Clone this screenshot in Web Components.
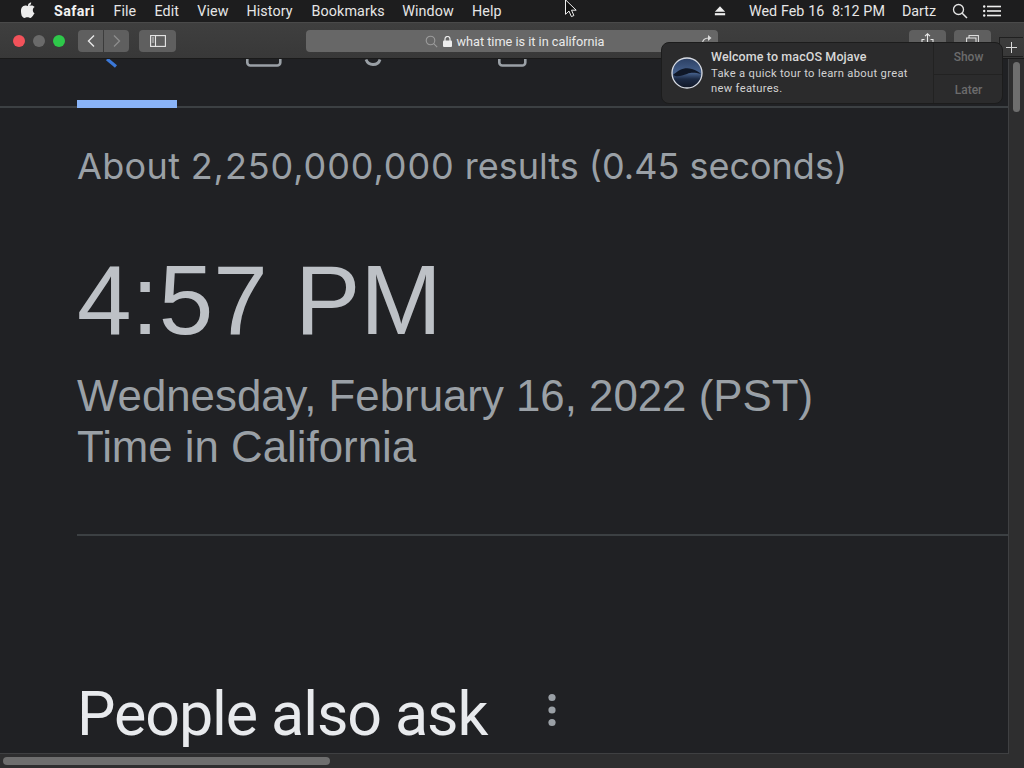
<!DOCTYPE html>
<html><head><meta charset="utf-8"><style>
html,body{margin:0;padding:0;width:1024px;height:768px;overflow:hidden;background:#202124}
</style></head><body>
<mac-screen>
<mac-menubar></mac-menubar>
<safari-toolbar></safari-toolbar>
<browser-view>
<search-tabs></search-tabs>
<result-stats><span style="letter-spacing:.35px">About </span><span style="letter-spacing:.9px">2,250,000,000</span> results (0.45 seconds)</result-stats>
<time-card time="4:57 PM" date="Wednesday, February 16, 2022 (PST)" place="Time in California"></time-card>
<people-ask>People also ask</people-ask>
</browser-view>
<mojave-note></mojave-note>
<mouse-cursor></mouse-cursor>
</mac-screen>
<script>
function def(name,html,setup){
  customElements.define(name,class extends HTMLElement{
    constructor(){super();this.attachShadow({mode:'open'}).innerHTML=html;}
    connectedCallback(){if(setup)setup(this,this.shadowRoot);}
  });
}
def('mac-screen',`<style>:host{display:flex;flex-direction:column;position:relative;width:1024px;height:768px;overflow:hidden;background:#202124;font-family:Inter,"Liberation Sans",sans-serif}</style><slot></slot>`);

def('mac-menubar',`<style>
:host{display:flex;align-items:center;height:22px;box-sizing:border-box;background:#1d1d1e;color:#e6e6e6;font:400 14.3px Roboto,sans-serif;flex:none;padding-left:21px}
span{display:block;white-space:nowrap}
b{font-weight:700;color:#f2f2f2;letter-spacing:.4px}
.l{display:flex;align-items:center;gap:0;letter-spacing:.1px}
.apple{margin-right:19px;margin-top:-2px;display:block}
.m{margin-right:18.200px}
.r{margin-left:auto;display:flex;align-items:center;padding-right:23px}
</style>
<div class="l"><svg class="apple" width="14" height="16" viewBox="0 0 14 16"><path fill="#ececec" d="M10.2 0.4c.1 1-.3 1.9-.9 2.6-.6.7-1.5 1.200-2.400 1.100-.1-.9.3-1.900.9-2.500.6-.7 1.600-1.200 2.400-1.200zM13.200 11.500c-.4.900-.6 1.300-1.100 2.100-.7 1.100-1.700 2.400-2.900 2.400-1.100 0-1.400-.7-2.800-.7-1.500 0-1.800.7-2.900.7-1.200 0-2.100-1.200-2.800-2.300C-.2 10.700-.4 7.200.8 5.400c.8-1.300 2.200-2 3.400-2 1.300 0 2.100.7 3.200.7 1 0 1.700-.7 3.200-.7 1.100 0 2.300.6 3.100 1.700-2.800 1.500-2.300 5.500.5 6.400z"/></svg>
<span class="m" style="margin-right:18.800px"><b>Safari</b></span><span class="m">File</span><span class="m">Edit</span><span class="m" style="margin-right:17.800px">View</span><span class="m" style="margin-right:19px">History</span><span class="m" style="margin-right:17.500px">Bookmarks</span><span class="m">Window</span><span>Help</span></div>
<div class="r">
<svg width="12" height="10" viewBox="0 0 14 11" style="margin-right:23px"><path fill="#eee" d="M7 0l6 6.500H1z"/><rect x="1" y="8" width="12" height="2.500" fill="#eee"/></svg>
<span style="margin-right:17px;word-spacing:.3px">Wed Feb 16&nbsp; 8:12 PM</span><span style="margin-right:16px">Dartz</span>
<svg width="16" height="16" viewBox="0 0 16 16" style="margin-right:15px"><circle cx="6.500" cy="6.500" r="5" fill="none" stroke="#e6e6e6" stroke-width="1.300"/><path d="M10.200 10.200l4.800 4.800" stroke="#e6e6e6" stroke-width="1.500"/></svg>
<svg width="18" height="12" viewBox="0 0 18 12"><g fill="#eee"><circle cx="1.200" cy="1.500" r="1.200"/><circle cx="1.200" cy="6" r="1.200"/><circle cx="1.200" cy="10.500" r="1.200"/><rect x="4" y=".7" width="14" height="1.600"/><rect x="4" y="5.200" width="14" height="1.600"/><rect x="4" y="9.700" width="14" height="1.600"/></g></svg>
</div>`);

def('safari-toolbar',`<style>
:host{display:flex;align-items:center;height:37px;box-sizing:border-box;flex:none;background:linear-gradient(#3f3f3f,#383838);border-top:1px solid #4a4a4a;border-bottom:1px solid #1a1a1a;padding:1px 0 0 13px;position:relative;z-index:2}
.lights{display:flex;gap:8px;margin-right:13px}
.lights i{display:block;width:12px;height:12px;border-radius:50%}
.btn{display:flex;align-items:center;justify-content:center;height:22px;background:#5f5f5f;border-radius:4px;flex:none}
.url{width:412px;margin-left:130px;box-sizing:border-box;padding-left:6px;display:flex;align-items:center;justify-content:center;color:#eaeaea;font:400 12.700px Roboto,sans-serif;position:relative;background:#676767}
.url svg{flex:none}
.reload{position:absolute;right:5px;top:4px}
.right{margin-left:191px;display:flex;gap:8px}
.newtab{margin-left:8px;width:24px;height:20px;border:1px solid #202020;border-right:none;box-sizing:border-box;display:flex;align-items:center;justify-content:center;margin-top:12px;flex:none}
</style>
<div class="lights"><i style="background:#f2525a"></i><i style="background:#6a6a6a"></i><i style="background:#2ec84a"></i></div>
<div class="btn" style="width:25px;border-radius:4px 0 0 4px;margin-right:1px"><svg width="10" height="14" viewBox="0 0 10 14"><path d="M8 1.500L2.500 7 8 12.500" fill="none" stroke="#e8e8e8" stroke-width="1.400"/></svg></div>
<div class="btn" style="width:25px;border-radius:0 4px 4px 0;margin-right:10px"><svg width="10" height="14" viewBox="0 0 10 14"><path d="M2 1.500L7.500 7 2 12.500" fill="none" stroke="#8c8c8c" stroke-width="1.400"/></svg></div>
<div class="btn" style="width:37px"><svg width="16" height="12" viewBox="0 0 16 12"><rect x=".6" y=".6" width="14.800" height="10.800" fill="none" stroke="#e8e8e8" stroke-width="1.100"/><path d="M5.500 .6v10.800" stroke="#e8e8e8" stroke-width="1.100"/><path d="M1.800 3h2.400M1.800 5h2.400M1.800 7h2.400" stroke="#e8e8e8" stroke-width=".8"/></svg></div>
<div class="btn url"><svg width="13" height="13" viewBox="0 0 13 13" style="margin-right:5px"><circle cx="5.500" cy="5.500" r="4.300" fill="none" stroke="#9c9c9c" stroke-width="1.100"/><path d="M8.700 8.700l3.500 3.500" stroke="#9c9c9c" stroke-width="1.100"/></svg><svg width="9" height="11" viewBox="0 0 9 11" style="margin-right:4px"><rect y="4.500" width="9" height="6.500" rx="1" fill="#eee"/><path d="M2 5V3a2.500 2.500 0 0 1 5 0v2" fill="none" stroke="#eee" stroke-width="1.200"/></svg><span>what time is it in california</span>
<svg class="reload" width="12" height="12" viewBox="0 0 12 12"><path d="M1.500 9.500C1.500 6 4 4 8 4" fill="none" stroke="#ddd" stroke-width="1.200"/><path d="M7 1l3.500 3L7 7z" fill="#ddd"/></svg></div>
<div class="right"><div class="btn" style="width:37px;align-items:flex-start;padding-top:3px;box-sizing:border-box"><svg width="13" height="17" viewBox="0 0 13 17"><path d="M3.500 6.500H1v9h11v-9H9.500M6.500 10V1M4 3.200L6.500 .8 9 3.200" fill="none" stroke="#e8e8e8" stroke-width="1.100"/></svg></div>
<div class="btn" style="width:37px;align-items:flex-start;padding-top:5px;box-sizing:border-box"><svg width="13" height="12" viewBox="0 0 13 12"><rect x="3" y=".6" width="9.400" height="7" fill="none" stroke="#e8e8e8"/><rect x=".6" y="3" width="9.400" height="8" fill="#5f5f5f" stroke="#e8e8e8"/></svg></div></div>
<div class="newtab"><svg width="11" height="11" viewBox="0 0 11 11"><path d="M5.500 0v11M0 5.500h11" stroke="#d8d8d8" stroke-width="1"/></svg></div>`);

def('browser-view',`<style>
:host{display:flex;flex:1;min-height:0;background:#2e2e2f}
.page{width:1009px;height:695px;box-sizing:border-box;background:#202124;border-right:1px solid #3f4042;border-bottom:1px solid #3f4042;overflow:hidden;flex:none;display:flex;flex-direction:column}
.vbar{flex:1;display:flex;justify-content:center;padding-top:3px}
.vbar i{display:block;width:7px;height:50px;border-radius:4px;background:#6e6e6e}
.hbar{position:absolute;left:3px;top:757px;width:327px;height:8px;border-radius:4px;background:#6e6e6e}
</style><div class="page"><slot></slot></div><div class="vbar"><i></i></div><div class="hbar"></div>`);

def('search-tabs',`<style>
:host{display:flex;flex:none;height:49px;box-sizing:border-box;border-bottom:2px solid #3c4043;padding-left:77px;position:relative;overflow:visible}
.cell{width:100px;height:49px;flex:none;position:relative;overflow:hidden}
.sel{height:8px;background:#8ab4f8;width:100px;position:absolute;left:0;top:41px}
svg{display:block;position:absolute;top:0}
.cell.one{overflow:visible}
</style>
<div class="cell one"><svg style="left:26px" width="16" height="10" viewBox="0 0 16 10"><path d="M4 0l9 7.500" stroke="#3b78d8" stroke-width="3.200"/></svg><div class="sel"></div></div>
<svg style="left:246px" width="36" height="8" viewBox="0 0 36 8"><path d="M1.300 0v3.500a3 3 0 0 0 3 3h27a3 3 0 0 0 3-3V0" fill="none" stroke="#9aa0a6" stroke-width="2.600"/></svg>
<svg style="left:364px" width="20" height="8" viewBox="0 0 20 8"><path d="M2 .5c1.500 4 4 5 7 5s6-1.500 7-5" fill="none" stroke="#9aa0a6" stroke-width="2.800"/></svg>
<svg style="left:498px" width="30" height="8" viewBox="0 0 30 8"><path d="M1.300 0v3.500a3 3 0 0 0 3 3h20a3 3 0 0 0 3-3V0" fill="none" stroke="#9aa0a6" stroke-width="2.600"/></svg>`);

def('result-stats',`<style>:host{display:block;flex:none;padding:37px 0 0 77px;font:400 36px/42px Inter,"Liberation Sans",sans-serif;color:#9aa0a6;white-space:nowrap;height:42px}</style><slot></slot>`);

def('time-card',`<style>
:host{display:block;flex:none;margin-left:77px;padding-top:60px;box-sizing:border-box;border-bottom:2px solid #3c4043;white-space:nowrap;font-family:"Liberation Sans",sans-serif;height:349px}
.t{font-size:98px;line-height:106px;color:#bdc1c6}
.d{font-size:43.800px;line-height:50px;color:#9aa0a6;margin-top:18px}
</style><div class="t"></div><div class="d"></div><div class="d" style="margin-top:1px"></div>`,(el,r)=>{
  const [t,d,p]=r.querySelectorAll('div');t.textContent=el.getAttribute('time');d.textContent=el.getAttribute('date');p.textContent=el.getAttribute('place');
});

def('people-ask',`<style>
:host{display:flex;align-items:flex-start;flex:none;padding:142px 0 0 77px;font:400 61px/72px Roboto,sans-serif;color:#e8eaed;white-space:nowrap;letter-spacing:-1.100px}
svg{display:block;margin:15px 0 0 60px;flex:none}
</style><span><slot></slot></span><svg width="10" height="34" viewBox="0 0 10 34"><g fill="#9aa0a6"><circle cx="5" cy="4.500" r="3.600"/><circle cx="5" cy="17" r="3.600"/><circle cx="5" cy="29.500" r="3.600"/></g></svg>`);

def('mojave-note',`<style>
:host{position:absolute;left:661px;top:42px;width:342px;height:62px;box-sizing:border-box;background:#2b2b2c;border:1px solid #1c1c1c;border-radius:8px;display:flex;z-index:5;font-family:Roboto,sans-serif;color:#dcdcdc}
.ic{width:49px;flex:none;display:flex;align-items:center;justify-content:center}
.tx{flex:1;padding-top:6px;min-width:0}
.h{font-size:12.500px;font-weight:500;line-height:15px;color:#d8d8d8;white-space:nowrap;letter-spacing:.1px}
.b{font-size:11.200px;line-height:14.500px;color:#d2d2d2;margin-top:3px;letter-spacing:.32px}
.ac{width:68px;flex:none;border-left:1px solid #222;display:flex;flex-direction:column;font-size:12px;color:#6c6c6c;font-weight:500;text-indent:1px}
.ac div{flex:1;display:flex;align-items:center;justify-content:center}
.ac div+div{border-top:1px solid #222;padding-top:1px}
.ac div:first-child{padding-bottom:3px;flex:none;height:28px}
</style>
<div class="ic"><svg width="32" height="32" viewBox="0 0 32 32"><defs><linearGradient id="g" x1="0" y1="0" x2="0" y2="1"><stop offset="0" stop-color="#2b3f63"/><stop offset=".5" stop-color="#46618c"/><stop offset=".7" stop-color="#1c2a44"/><stop offset="1" stop-color="#101625"/></linearGradient></defs><circle cx="16" cy="16" r="15" fill="url(#g)" stroke="#d8dce4" stroke-width="1.300"/><path d="M2 18c6-5 11-8 19-6 4 1 7 3 9 5-5-1-9-2-14 0-5 1-9 4-14 1z" fill="#0f1727"/></svg></div>
<div class="tx"><div class="h">Welcome to macOS Mojave</div><div class="b">Take a quick tour to learn about great<br>new features.</div></div>
<div class="ac"><div>Show</div><div>Later</div></div>`);

def('mouse-cursor',`<style>:host{position:absolute;left:564px;top:-1px;z-index:9;display:block;width:14px;height:19px}svg{display:block}</style><svg width="14" height="19" viewBox="0 0 14 19"><path d="M1.500 .8v14.500l3.500-3.200 2.400 5.500 2.500-1.100-2.400-5.300h4.700z" fill="#111" stroke="#eee" stroke-width="1"/></svg>`);
</script>
</body></html>
